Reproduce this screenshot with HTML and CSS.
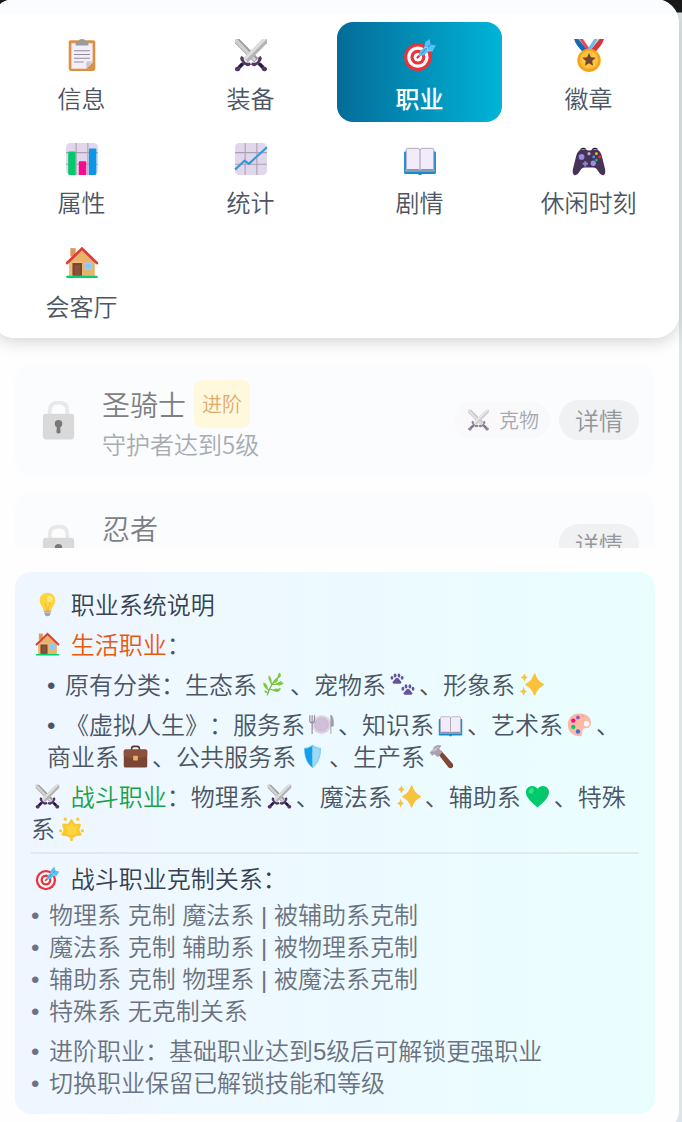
FILE: index.html
```html
<!DOCTYPE html>
<html lang="zh-CN">
<head>
<meta charset="utf-8">
<meta name="viewport" content="width=device-width, initial-scale=1">
<title>职业</title>
<link rel="stylesheet" href="styles.css">
</head>
<body>
<svg class="sprite" aria-hidden="true">
  <symbol id="swords" viewBox="0 0 32 32">
    <path d="M1 1v4l18 18 4-4L5 1z" fill="#9b9b9b"/><path d="M1 1v3l18 18 2-2L3 1z" fill="#d0d0d0"/>
    <path d="M31 1v4L13 23l-4-4L27 1z" fill="#b4b4b4"/><path d="M31 1 11 21l-2-2L27 1z" fill="#dedede"/>
    <path d="M7 17c-2 2-1 4 1 6l-5 4c-2 0-3 3-1 4s4 0 4-2l4-4c2 2 4 2 6 0l-1-2c-4 1-6-1-6-5z" fill="#533566"/>
    <path d="M25 17c2 2 1 4-1 6l5 4c2 0 3 3 1 4s-4 0-4-2l-4-4c-2 2-4 2-6 0l1-2c4 1 6-1 6-5z" fill="#533566"/>
    <path d="m4 26 3-3 2 2-3 3zM28 26l-3-3-2 2 3 3z" fill="#1c1c3b"/>
  </symbol>
  <symbol id="target" viewBox="0 0 32 32">
    <circle cx="14" cy="18" r="13" fill="#e8343c"/><circle cx="14" cy="18" r="10" fill="#fff"/><circle cx="14" cy="18" r="7" fill="#e8343c"/><circle cx="14" cy="18" r="4" fill="#fff"/>
    <path d="m13 19 4-4" stroke="#e8343c" stroke-width="2"/>
    <path d="M15 17c0-4 2-6 5-8l1-5 4-3 1 5 5 1-3 5-5 1c-2 3-4 4-8 4z" fill="#57c0f4"/>
    <path d="m17 15 9-9" stroke="#3195dc" stroke-width="1" fill="none"/>
    <path d="m20 9 3 0 0 3 5 0" stroke="#86d6fb" fill="none"/>
  </symbol>
  <symbol id="clipboard" viewBox="0 0 32 32">
    <rect x="3.500" y="2" width="25" height="29" rx="2" fill="#da9144"/><path d="M6 5h20v18l-6 6H6z" fill="#f3eef8"/>
    <path d="M26 22h-5q-1 0-1 1v6z" fill="#cdc4d6"/><path d="M10 7V4q0-1 2-1h1q0-2 3-2t3 2h1q2 0 2 1v3z" fill="#9b9b9b"/>
    <path d="M8.500 12h15M8.500 15.500h15M8.500 19h15M8.500 22.500h9" stroke="#918c9b" stroke-width="1"/>
  </symbol>
  <symbol id="medal" viewBox="0 0 32 32">
    <path d="M2 1h9l7 10-6 4C7 10 3 5 2 1z" fill="#d3d3d3"/><path d="M30 1h-9l-7 10 6 4c5-5 9-10 10-14z" fill="#d3d3d3"/>
    <path d="M2 1h4l9 11-4 2C6 9 3 5 2 1z" fill="#1469b5"/><path d="m10 1 7 10-2 2L7 1z" fill="#ef4250"/>
    <path d="M30 1h-4l-9 11 4 2c5-5 8-9 9-13z" fill="#df303d"/><path d="m21 1-6 9 2 3 7-12z" fill="#67bfe8"/>
    <circle cx="16" cy="21" r="11" fill="#f5a51b"/><circle cx="16" cy="20.500" r="8.500" fill="#ffc23c"/>
    <path d="m16 14 1.800 4.200 4.500.4-3.400 3 1 4.400-3.900-2.300L12.100 26l1-4.400-3.400-3 4.500-.4z" fill="#704632"/>
  </symbol>
  <symbol id="bars" viewBox="0 0 32 32">
    <rect x="1" y="1" width="30" height="30" rx="4" fill="#e0d7eb"/><path d="M10.500 1v30M21.500 1v30M1 10h30M1 21h30" stroke="#aba0b3"/>
    <path d="M3 10q0-1 1-1h5q1 0 1 1v21H4q-1 0-1-2z" fill="#00c96b"/><path d="M13 19q0-1 1-1h5q1 0 1 1v12h-7z" fill="#f70a8d"/><path d="M22.500 7q0-1 1-1h5q1 0 1 1v22q0 2-1 2h-6z" fill="#0897e9"/>
  </symbol>
  <symbol id="chart" viewBox="0 0 32 32">
    <rect x="1" y="1" width="30" height="30" rx="4" fill="#e0d7eb"/><path d="M10.500 1v30M21.500 1v30M1 10h30M1 21h30" stroke="#aba0b3"/>
    <path d="m1 26 9-8.500 4 3L31 5" fill="none" stroke="#3198e8" stroke-width="2"/>
  </symbol>
  <symbol id="book" viewBox="0 0 32 32">
    <path d="M1 10q0-1 1-1h28q1 0 1 1v19q0 1-1 1H18l-1 1h-2l-1-1H2q-1 0-1-1z" fill="#168bd2"/>
    <path d="M2 26h28v2H2z" fill="#87a8c5"/><path d="M3 8q0-2 2-2h9l2 1 2-1h9q2 0 2 2v18H18l-2 1-2-1H3z" fill="#f2ebfa" stroke="#a298ad" stroke-width=".8"/>
    <path d="M16 7v20" stroke="#a298ad"/><path d="M4 26h10l2 1 2-1h10" stroke="#998da4" fill="none"/>
  </symbol>
  <symbol id="gamepad" viewBox="0 0 32 32">
    <path d="M9 7h4q1 1 3 1t3-1h4q4 1 5 6l3 12q1 5-1 6-3 1-5-3-2-4-5-4h-8q-3 0-5 4-2 4-5 3-2-1-1-6l3-12q1-5 5-6z" fill="#483358"/>
    <path d="M8 7q3-2 5 0M19 7q3-2 5 0" stroke="#1c1c3b" fill="none"/><circle cx="9" cy="14" r="2.700" fill="#998edd"/><circle cx="20" cy="20" r="2.500" fill="#998edd"/>
    <path d="M12.500 18v5M10 20.500h5" stroke="#8d82cb" stroke-width="2"/><circle cx="16" cy="11" r="1.500" fill="#b9aee0"/>
    <circle cx="23" cy="11" r="1.300" fill="#f9c23c"/><circle cx="20.500" cy="14" r="1.300" fill="#3f9bf0"/><circle cx="26" cy="14" r="1.300" fill="#f8312f"/><circle cx="23" cy="17" r="1.300" fill="#00c96b"/>
  </symbol>
  <symbol id="house" viewBox="0 0 32 32">
    <path d="M5 2h5v8H5z" fill="#d99a59"/><path d="M16 3 4 15v14h24V15z" fill="#e8b36b"/><path d="M4 14h12v15H4z" fill="#edbd78"/>
    <path d="M2 16 16 2.500 30 16" stroke="#e13a3c" stroke-width="2.500" stroke-linecap="round" fill="none"/>
    <path d="M7 16h9v12H7z" fill="#7d4533"/><path d="M9 18h5v10H9z" fill="#8c523e"/><rect x="19" y="16" width="6" height="6" fill="#83cbff" stroke="#9acfff"/>
    <rect x="1" y="28" width="30" height="2" rx="1" fill="#00d26a"/>
  </symbol>
  <symbol id="lock" viewBox="0 0 32 32">
    <path d="M9 12V8q0-6 7-6t7 6v4" fill="none" stroke="#e8e8e8" stroke-width="3"/><rect x="3.500" y="11" width="25" height="20.500" rx="2.500" fill="#d9d9d9"/>
    <circle cx="16" cy="19" r="3" fill="#797979"/><path d="m15 18-.7 8q1.700 1.500 3.400 0L17 18z" fill="#797979"/>
  </symbol>
  <symbol id="bulb" viewBox="0 0 32 32">
    <path d="M16 1C9 1 6 6 6 11c0 6 5 8 5 14h10c0-6 5-8 5-14 0-5-3-10-10-10z" fill="#fcd53f"/><path d="M13 14q0 4 2 6v5h2v-5q3-3 2-6" fill="none" stroke="#f7a72d"/>
    <circle cx="19" cy="9" r="4" fill="#ffe87c"/><path d="M12 24h8v3l-1 3q-3 2-6 0l-1-3z" fill="#a8a1ad"/><path d="M12 26h8" stroke="#d8d3dd"/>
  </symbol>
  <symbol id="herb" viewBox="0 0 32 32">
    <path d="M8 30C11 20 16 11 23 6M10 24l-5-7M14 17l-3-8M12 22q6 3 13-1M15 16q6 1 11-4" fill="none" stroke="#6db536" stroke-width="1.500"/>
    <path d="M22 8q-2-5 2-7 4 5-2 7zM13 14Q8 9 10 4q5 5 3 10zM8 22Q2 19 3 13q7 3 5 9zM16 14q1-5 6-5-1 6-6 5zM19 16q4-5 10-2-3 5-10 2zM15 23q5-4 10 0-5 5-10 0zM9 27Q5 28 4 24q4-1 5 3z" fill="#80c93c"/>
  </symbol>
  <symbol id="paws" viewBox="0 0 32 32">
    <g id="paw" fill="#65539b"><path d="M5 11q4-7 8 0 4 4-1 4H6q-5 0-1-4z"/><ellipse cx="2.500" cy="7.500" rx="1.800" ry="2.500"/><ellipse cx="6.500" cy="4.500" rx="1.800" ry="2.700"/><ellipse cx="11.500" cy="4.500" rx="1.800" ry="2.700"/><ellipse cx="15.500" cy="7.500" rx="1.800" ry="2.500"/></g>
    <use href="#paw" x="14" y="14"/>
  </symbol>
  <symbol id="sparkles" viewBox="0 0 32 32">
    <path d="M20 3q3 10 11 13-8 4-11 13-3-9-11-13 8-3 11-13z" fill="#f9c23c" stroke="#f9c23c" stroke-width="2" stroke-linejoin="round"/><path d="M7 2q1 4 4 5-3 1-4 5-1-4-5-5 4-1 5-5zM6 19q1 5 4 6-3 1-4 5-1-4-5-5 4-1 5-6z" fill="#f9c23c"/>
  </symbol>
  <symbol id="plate" viewBox="0 0 32 32">
    <circle cx="16" cy="16" r="12" fill="#ded1e2"/><circle cx="16" cy="16" r="8.500" fill="#d0bfd8" stroke="#c4b4ce"/>
    <path d="M1 4v7q0 3 3 3t3-3V4M4 4v24" stroke="#938c9a" stroke-width="1.500" fill="none"/><path d="M28 28V4q3 2 3 7v7h-3" fill="#aba3b1" stroke="#938c9a"/>
  </symbol>
  <symbol id="palette" viewBox="0 0 32 32">
    <path d="M17 2C7 1 1 9 1 16c0 10 8 15 15 15 6 0 2-5 4-8 2-4 6-1 9-4C34 11 27 2 17 2z" fill="#ffb8a5"/>
    <circle cx="25" cy="15" r="3.500" fill="#ecfcff"/><circle cx="14" cy="7" r="2.500" fill="#8b62b8"/><circle cx="8" cy="11" r="2.800" fill="#f70a8d"/><circle cx="8" cy="19" r="2.800" fill="#00c96b"/><circle cx="14" cy="25" r="2.800" fill="#3f70d9"/><circle cx="20" cy="5" r="1.500" fill="#f9a89b"/>
  </symbol>
  <symbol id="briefcase" viewBox="0 0 32 32">
    <path d="M11 8V6q0-3 3-3h4q3 0 3 3v2" fill="none" stroke="#5c3528" stroke-width="2"/><rect x="1" y="7" width="30" height="23" rx="2" fill="#7a4534"/>
    <path d="M1 9q0-2 2-2h26q2 0 2 2v6q-7 4-15 4T1 15z" fill="#8b513d"/><rect x="13" y="15" width="6" height="6" rx="1" fill="#f3ad61"/>
  </symbol>
  <symbol id="shield" viewBox="0 0 32 32">
    <path d="M16 1Q11 5 5 5q0 18 11 26 11-8 11-26-6 0-11-4z" fill="#8ccff3"/><path d="M16 2q-4 4-10 4 0 16 10 24z" fill="#12a0ea"/><path d="M16 3q4 4 9 4 0 15-9 22z" fill="#9bd9f6"/>
  </symbol>
  <symbol id="hammer" viewBox="0 0 32 32">
    <path d="m11 12 4-4 15 17q2 3 0 5t-5 0z" fill="#7d4533"/><path d="m14 15 15 14" stroke="#915640"/><path d="m1 11 4-4 1-3q4-4 10-2l-3 4 4 5-6 6-4-4-3 2z" fill="#a9a1b1"/><path d="m2 10 4-4 7-3-4 6z" fill="#c7bfce"/>
  </symbol>
  <symbol id="heart" viewBox="0 0 32 32">
    <path d="M16 6q4-5 9-3c7 2 7 10 3 15-3 5-8 8-12 12C12 26 7 23 4 18 0 13 0 5 7 3q5-2 9 3z" fill="#00c96b"/><path d="M26 5q5 5 1 12-5 6-11 10 10-7 11-13 1-5-1-9z" fill="#20b667"/><ellipse cx="8" cy="9" rx="3" ry="4" fill="#34df83" transform="rotate(30 8 9)"/>
  </symbol>
  <symbol id="star" viewBox="0 0 32 32">
    <path d="m16 5 4 6 7 0-2 7 3 6-7 1-5 3-5-3-7-1 3-6-2-7 7 0z" fill="#fcc72b" stroke="#fcc72b" stroke-width="2" stroke-linejoin="round"/><path d="m16 8 3 5 5 0-2 5 1 5-7 1-6-1 1-5-3-5 5 0z" fill="#fcd53f"/>
    <g fill="#fcc72b"><circle cx="8" cy="4" r="2"/><circle cx="24" cy="4" r="2"/><circle cx="30" cy="19" r="2"/><circle cx="2" cy="19" r="2"/><circle cx="16" cy="30" r="2"/></g>
  </symbol>
</svg>

<main class="dialog">
  <nav class="tabs" aria-label="功能">
    <button class="tab"><svg class="tab-icon"><use href="#clipboard"/></svg>信息</button>
    <button class="tab"><svg class="tab-icon"><use href="#swords"/></svg>装备</button>
    <button class="tab tab-active" aria-current="page"><svg class="tab-icon"><use href="#target"/></svg>职业</button>
    <button class="tab"><svg class="tab-icon"><use href="#medal"/></svg>徽章</button>
    <button class="tab"><svg class="tab-icon"><use href="#bars"/></svg>属性</button>
    <button class="tab"><svg class="tab-icon"><use href="#chart"/></svg>统计</button>
    <button class="tab"><svg class="tab-icon"><use href="#book"/></svg>剧情</button>
    <button class="tab"><svg class="tab-icon"><use href="#gamepad"/></svg>休闲时刻</button>
    <button class="tab"><svg class="tab-icon"><use href="#house"/></svg>会客厅</button>
  </nav>

  <div class="content">
    <section class="jobs" aria-label="职业列表">
      <article class="job">
        <svg class="lock"><use href="#lock"/></svg>
        <div class="job-text">
          <h3 class="job-name">圣骑士<span class="badge">进阶</span></h3>
          <p class="job-need">守护者达到5级</p>
        </div>
        <span class="counter"><svg class="counter-icon"><use href="#swords"/></svg>克物</span>
        <button class="detail">详情</button>
      </article>
      <article class="job">
        <svg class="lock"><use href="#lock"/></svg>
        <div class="job-text">
          <h3 class="job-name">忍者</h3>
          <p class="job-need">&nbsp;</p>
        </div>
        <button class="detail">详情</button>
      </article>
    </section>

    <section class="guide">
      <h2 class="guide-title"><svg class="emoji"><use href="#bulb"/></svg> 职业系统说明</h2>
      <p><svg class="emoji"><use href="#house"/></svg> <span class="life">生活职业</span>：</p>
      <p class="indent"><span class="dot">•</span>原有分类：生态系<svg class="emoji"><use href="#herb"/></svg>、宠物系<svg class="emoji"><use href="#paws"/></svg>、形象系<svg class="emoji"><use href="#sparkles"/></svg></p>
      <p class="indent"><span class="dot">•</span>《虚拟人生》：服务系<svg class="emoji"><use href="#plate"/></svg>、知识系<svg class="emoji"><use href="#book"/></svg>、艺术系<svg class="emoji"><use href="#palette"/></svg>、商业系<svg class="emoji"><use href="#briefcase"/></svg>、公共服务系<svg class="emoji"><use href="#shield"/></svg>、生产系<svg class="emoji"><use href="#hammer"/></svg></p>
      <p><svg class="emoji"><use href="#swords"/></svg> <span class="battle">战斗职业</span>：物理系<svg class="emoji"><use href="#swords"/></svg>、魔法系<svg class="emoji"><use href="#sparkles"/></svg>、辅助系<svg class="emoji"><use href="#heart"/></svg>、特殊系<svg class="emoji"><use href="#star"/></svg></p>
      <div class="relations">
        <h3 class="relations-title"><svg class="emoji"><use href="#target"/></svg> 战斗职业克制关系：</h3>
        <div class="muted">
          <p><span class="dot">•</span>物理系 克制 魔法系 | 被辅助系克制</p>
          <p><span class="dot">•</span>魔法系 克制 辅助系 | 被物理系克制</p>
          <p><span class="dot">•</span>辅助系 克制 物理系 | 被魔法系克制</p>
          <p><span class="dot">•</span>特殊系 无克制关系</p>
        </div>
      </div>
      <div class="muted">
        <p><span class="dot">•</span>进阶职业：基础职业达到5级后可解锁更强职业</p>
        <p><span class="dot">•</span>切换职业保留已解锁技能和等级</p>
      </div>
    </section>
  </div>
</main>
</body>
</html>
```
FILE: styles.css
```css
* {
  box-sizing: border-box;
}

html {
  height: 100%;
  overflow: hidden;
}

body {
  margin: 0;
  overflow: hidden;
  background: linear-gradient(#1a1a1a 12px, #dce6ea 13px);
  font-family: "Liberation Sans", "Noto Sans CJK SC", sans-serif;
  font-size: 24px;
  font-weight: 350;
  line-height: 32px;
  text-spacing-trim: space-all;
  color: #4b5563;
}

h2, h3, p {
  margin: 0;
  font: inherit;
}

button {
  border: 0;
  background: none;
  font: inherit;
  color: inherit;
}

.sprite {
  position: absolute;
  width: 0;
  height: 0;
}

/* The dialog bleeds slightly past the left and top window edges. */
.dialog {
  margin: -1px 3px 0 -9px;
  border-radius: 24px;
  background: #fefeff;
}

.tabs {
  display: grid;
  grid-template-columns: repeat(4, 1fr);
  gap: 4px;
  padding: 23px 8px 8px;
  border-radius: 24px;
  background: linear-gradient(#fafcff 14px, #fff 15px);
  box-shadow: 0 4px 16px rgba(0, 0, 0, 0.16);
  font-family: "Noto Sans CJK SC", sans-serif;
}

.tab {
  display: flex;
  flex-direction: column;
  align-items: center;
  gap: 10px;
  padding: 16px 8px 8px;
  border-radius: 16px;
}

.tab-active {
  background: linear-gradient(to right, #046c98, #00b4d8);
  color: #fff;
  font-weight: 500;
}

.tab-icon {
  width: 34px;
  height: 34px;
}

.content {
  display: flex;
  flex-direction: column;
  gap: 24px;
  padding: 26px 24px 20px;
}

.jobs {
  display: flex;
  flex-direction: column;
  gap: 16px;
  max-height: 184px;
  overflow: hidden;
  font-family: "Noto Sans CJK SC", sans-serif;
}

.job {
  display: flex;
  flex: none;
  align-items: center;
  gap: 8px;
  padding: 16px;
  border-radius: 16px;
  background: #fbfcfe;
}

.lock {
  width: 55px;
  height: 40px;
}

.job-text {
  flex: 1;
  padding-left: 8px;
}

.job-name {
  display: flex;
  align-items: center;
  gap: 8px;
  font-size: 28px;
  line-height: 40px;
  color: #7c7f83;
}

.job-need {
  color: #a8acb2;
}

.badge {
  padding: 0 8px;
  border-radius: 8px;
  background: #fef8dc;
  font-size: 20px;
  line-height: 48px;
  color: #e0ab72;
}

.counter {
  display: flex;
  align-items: center;
  gap: 8px;
  padding: 2px 12px;
  border-radius: 18px;
  background: #f9f9fb;
  font-size: 20px;
  color: #a5a9b0;
}

.counter-icon {
  width: 25px;
  height: 22px;
  opacity: 0.6;
}

.detail {
  padding: 4px 16px;
  border-radius: 20px;
  background: #eff1f2;
  color: #92979e;
}

.guide {
  display: flex;
  flex-direction: column;
  gap: 8px;
  padding: 18px 16px 14px;
  border-radius: 16px;
  background: linear-gradient(to right, #eff6ff, #eafeff);
}

.guide-title,
.relations-title {
  color: #374151;
}

.emoji {
  width: 25px;
  height: 25px;
  margin: 0 4px;
  vertical-align: -3px;
}

.life {
  color: #ea580c;
}

.battle {
  color: #16a34a;
}

.indent {
  padding-left: 16px;
}

.dot {
  display: inline-block;
  width: 18px;
}

.relations {
  display: flex;
  flex-direction: column;
  gap: 4px;
  margin-top: -2px;
  padding-top: 10px;
  border-top: 2px solid #e0e7ee;
}

.muted {
  color: #6b7280;
}
```
